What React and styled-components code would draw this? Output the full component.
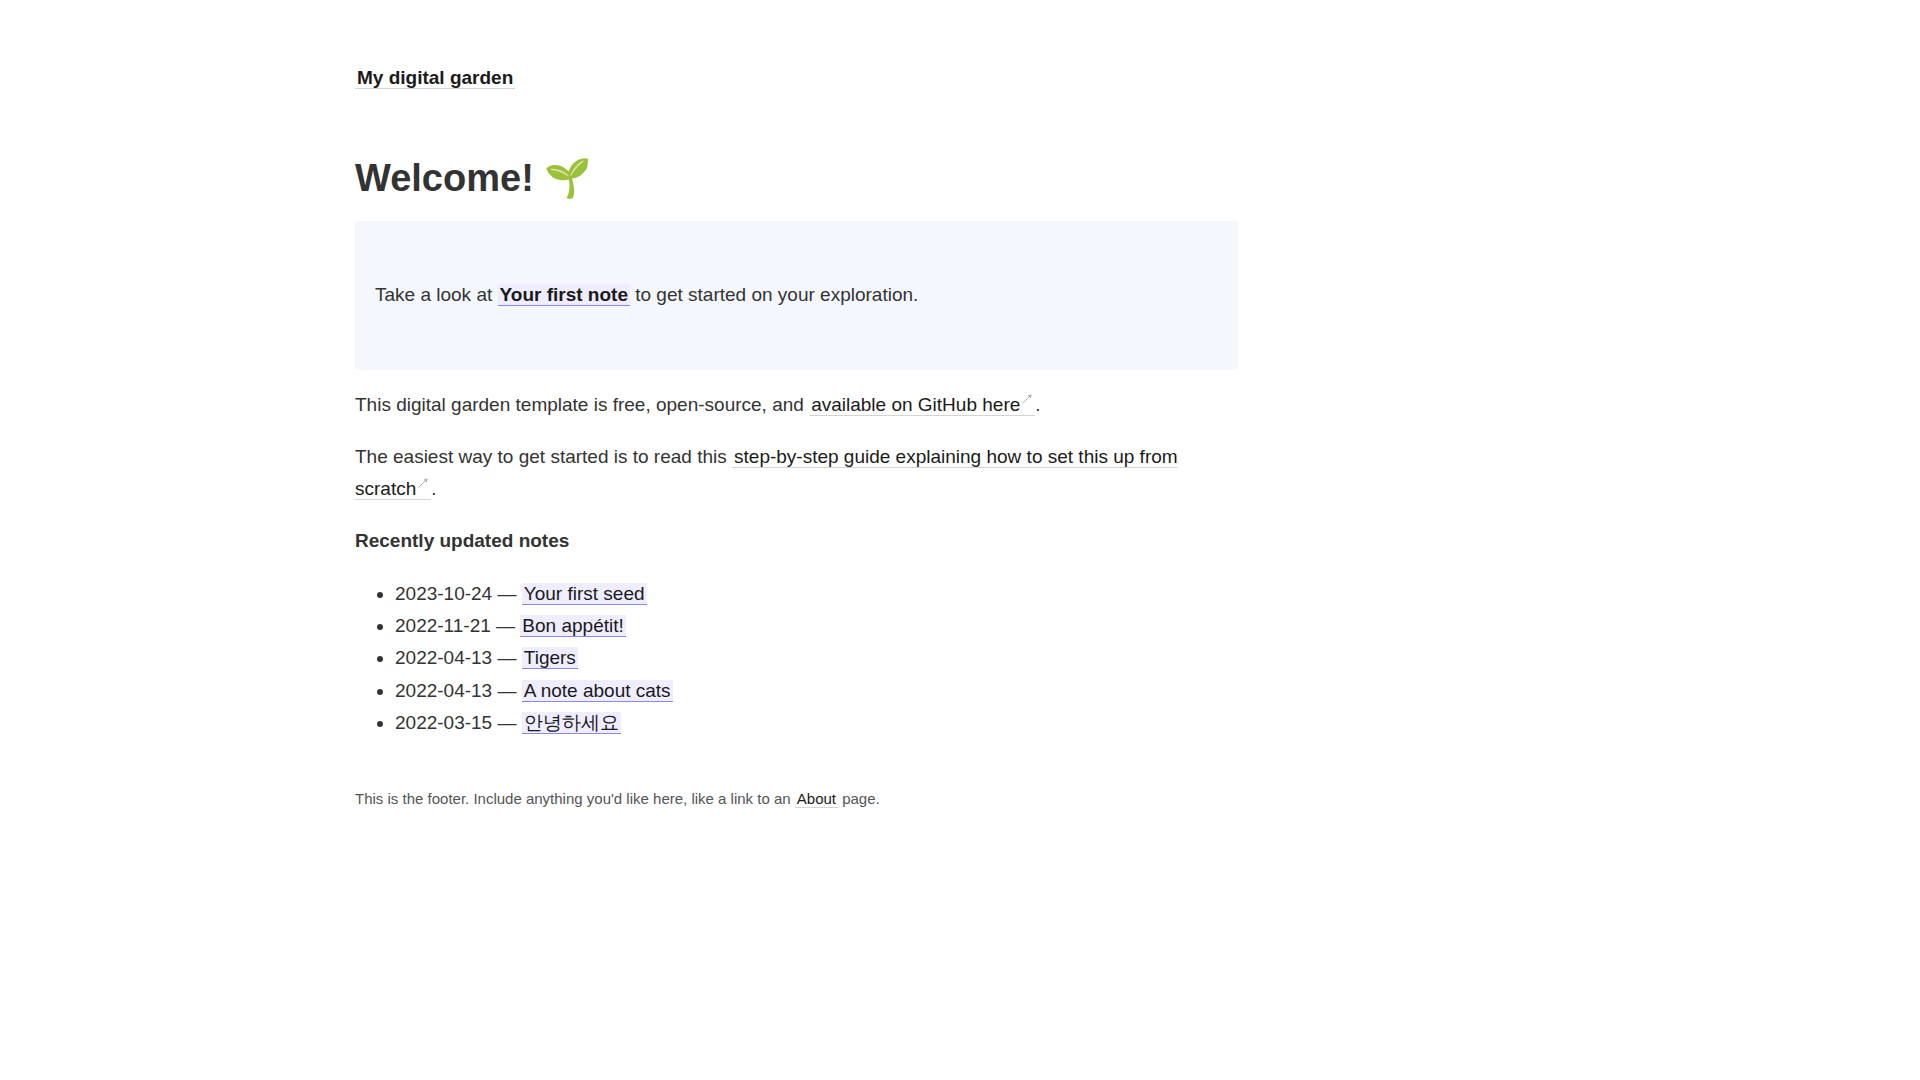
import React from "react";
import styled, { createGlobalStyle } from "styled-components";

const GlobalStyle = createGlobalStyle`
  *, *::before, *::after { box-sizing: border-box; }
  body {
    margin: 0;
    background: #fff;
    color: #333;
    font-family: "Liberation Sans", Arial, sans-serif;
    font-size: 19px;
    line-height: 1.7;
  }
`;

const Page = styled.div`
  max-width: 1250px;
  margin: 0 auto;
  padding: 62px 20px;
`;

const Column = styled.div`
  width: 73%;
`;

const Anchor = styled.a`
  padding: 0 2px;
  color: #1a1a1a;
  text-decoration: none;
  border-bottom: 1px solid #d4d4d4;
`;

const SiteLink = styled(Anchor)`
  font-weight: 700;
`;

const NoteLink = styled(Anchor)`
  background: #efedff;
  border-color: #8b88e6;
`;

const Arrow = styled.svg`
  width: 13px;
  height: 10px;
  vertical-align: 7px;
  color: #aaa;
`;

const Title = styled.h1`
  margin: 56px 0 14px;
  font-size: 38px;
  line-height: 1.5;
`;

const Callout = styled.p`
  margin: 0 0 19px;
  padding: 58px 20px;
  background: #f5f7ff;
  border-radius: 4px;
`;

const Paragraph = styled.p`
  margin: 0 0 20px;
`;

const Notes = styled.ul`
  margin: 0 0 47px;
  padding-left: 40px;
`;

const Footer = styled.footer`
  color: #555;
  font-size: 15px;
`;

const notes = [
  { date: "2023-10-24", title: "Your first seed" },
  { date: "2022-11-21", title: "Bon appétit!" },
  { date: "2022-04-13", title: "Tigers" },
  { date: "2022-04-13", title: "A note about cats" },
  { date: "2022-03-15", title: "안녕하세요" },
];

function ExternalLink({ href, children }) {
  return (
    <Anchor href={href}>
      {children}
      <Arrow viewBox="0 0 13 10" aria-hidden="true">
        <path d="M2.5 9.5 L10 2" stroke="currentColor" strokeWidth="0.9" />
        <path d="M11.7 0.4 L10.7 4.4 L7.7 1.4 Z" fill="currentColor" />
      </Arrow>
    </Anchor>
  );
}

export default function App() {
  return (
    <Page>
      <GlobalStyle />
      <Column>
        <nav>
          <SiteLink href="#home">My digital garden</SiteLink>
        </nav>
        <main>
          <Title>Welcome! 🌱</Title>
          <Callout>
            Take a look at{" "}
            <NoteLink href="#first-note">
              <strong>Your first note</strong>
            </NoteLink>{" "}
            to get started on your exploration.
          </Callout>
          <Paragraph>
            This digital garden template is free, open-source, and{" "}
            <ExternalLink href="#github">available on GitHub here</ExternalLink>.
          </Paragraph>
          <Paragraph>
            The easiest way to get started is to read this{" "}
            <ExternalLink href="#guide">
              step-by-step guide explaining how to set this up from scratch
            </ExternalLink>
            .
          </Paragraph>
          <Paragraph>
            <strong>Recently updated notes</strong>
          </Paragraph>
          <Notes>
            {notes.map((note) => (
              <li key={note.title}>
                {note.date} — <NoteLink href="#note">{note.title}</NoteLink>
              </li>
            ))}
          </Notes>
        </main>
        <Footer>
          This is the footer. Include anything you'd like here, like a link to an{" "}
          <Anchor href="#about">About</Anchor> page.
        </Footer>
      </Column>
    </Page>
  );
}
